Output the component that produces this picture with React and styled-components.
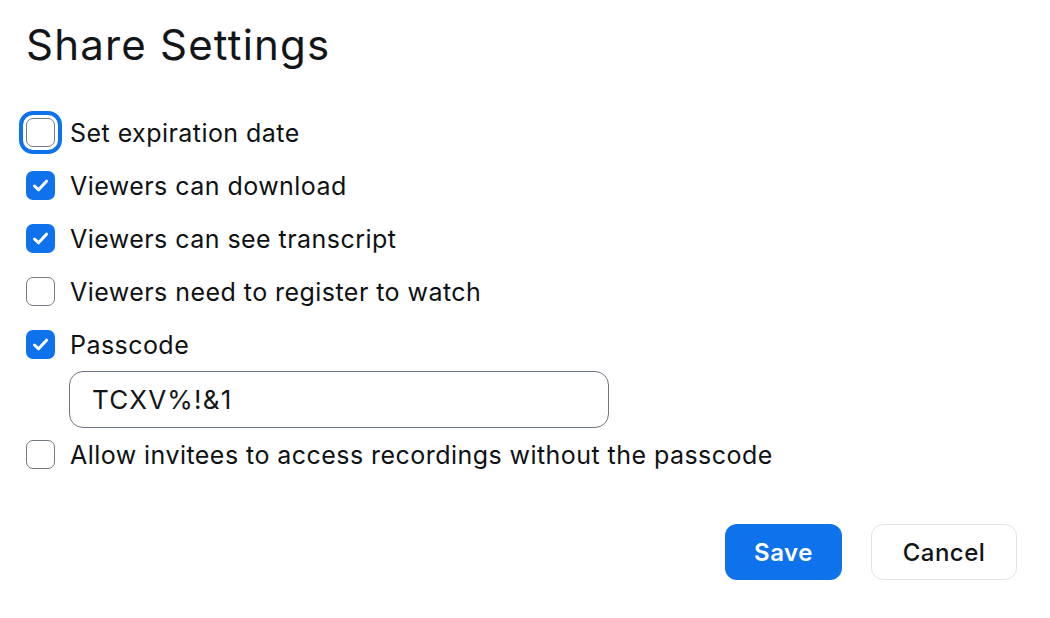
import React, { useState } from "react";
import styled, { createGlobalStyle } from "styled-components";

const GlobalStyle = createGlobalStyle`
  html, body {
    margin: 0;
    padding: 0;
    background: #ffffff;
  }
  body {
    font-family: "Inter", "Liberation Sans", sans-serif;
    color: #131619;
    -webkit-font-smoothing: antialiased;
  }
`;

const options = [
  { id: "expire", label: "Set expiration date", checked: false, focused: true },
  { id: "download", label: "Viewers can download", checked: true },
  { id: "transcript", label: "Viewers can see transcript", checked: true },
  { id: "register", label: "Viewers need to register to watch", checked: false },
  { id: "passcode", label: "Passcode", checked: true, hasInput: true },
  {
    id: "invitees",
    label: "Allow invitees to access recordings without the passcode",
    checked: false,
  },
];

const CheckIcon = () => (
  <svg width="21" height="21" viewBox="0 0 21 21" fill="none">
    <polyline
      points="4.5,11 8.6,14.8 16.5,6.2"
      stroke="#ffffff"
      strokeWidth="3"
      strokeLinecap="round"
      strokeLinejoin="round"
    />
  </svg>
);

const Checkbox = ({ checked, focused, onToggle }) => (
  <Box checked={`${checked}`} focused={`${!!focused}`} onClick={onToggle}>
    {checked && <CheckIcon />}
  </Box>
);

const App = () => {
  const [items, setItems] = useState(options);
  const [passcode, setPasscode] = useState("TCXV%!&1");

  const toggle = (id) => {
    setItems((prev) =>
      prev.map((it) => (it.id === id ? { ...it, checked: !it.checked } : it))
    );
  };

  return (
    <>
      <GlobalStyle />
      <Dialog>
        <Title>Share Settings</Title>
        <OptionList>
          {items.map((item) => (
            <React.Fragment key={item.id}>
              <Row>
                <Checkbox
                  checked={item.checked}
                  focused={item.focused}
                  onToggle={() => toggle(item.id)}
                />
                <Label onClick={() => toggle(item.id)}>{item.label}</Label>
              </Row>
              {item.hasInput && (
                <InputRow>
                  <TextInput
                    value={passcode}
                    onChange={(e) => setPasscode(e.target.value)}
                  />
                </InputRow>
              )}
            </React.Fragment>
          ))}
        </OptionList>
        <Footer>
          <PrimaryButton>Save</PrimaryButton>
          <SecondaryButton>Cancel</SecondaryButton>
        </Footer>
      </Dialog>
    </>
  );
};

const Dialog = styled.div`
  width: 1050px;
  height: 618px;
  box-sizing: border-box;
  padding: 20px 33px 0 26px;
  display: flex;
  flex-direction: column;
`;

const Title = styled.h1`
  margin: 0;
  font-size: 42px;
  line-height: 50px;
  font-weight: 400;
  letter-spacing: 1.2px;
`;

const OptionList = styled.div`
  margin-top: 36px;
  display: flex;
  flex-direction: column;
`;

const Row = styled.div`
  height: 53px;
  display: flex;
  align-items: center;
  gap: 15px;
`;

const Box = styled.div`
  flex: none;
  width: 29px;
  height: 29px;
  box-sizing: border-box;
  border-radius: 7px;
  display: flex;
  align-items: center;
  justify-content: center;
  cursor: pointer;
  background: ${({ checked }) => (checked === "true" ? "#0e72ed" : "#ffffff")};
  border: ${({ checked }) =>
    checked === "true" ? "none" : "1.5px solid #747a82"};
  outline: ${({ focused }) =>
    focused === "true" ? "4px solid #0e72ed" : "none"};
  outline-offset: 3px;
`;

const Label = styled.span`
  font-size: 25px;
  line-height: 30px;
  letter-spacing: 0.45px;
  color: #0f1215;
  cursor: pointer;
`;

const InputRow = styled.div`
  padding-left: 43px;
  display: flex;
`;

const TextInput = styled.input`
  width: 540px;
  height: 57px;
  box-sizing: border-box;
  padding: 0 22px;
  border: 1px solid #6e7680;
  border-radius: 14px;
  font-family: "Inter", "Liberation Sans", sans-serif;
  font-size: 26px;
  letter-spacing: 1.2px;
  color: #131619;
  outline: none;
  background: #ffffff;
`;

const Footer = styled.div`
  margin-top: 43px;
  display: flex;
  justify-content: flex-end;
  gap: 29px;
`;

const ButtonBase = styled.button`
  height: 56px;
  box-sizing: border-box;
  border-radius: 12px;
  font-family: "Inter", "Liberation Sans", sans-serif;
  font-size: 24px;
  letter-spacing: 0.5px;
  cursor: pointer;
`;

const PrimaryButton = styled(ButtonBase)`
  width: 117px;
  border: none;
  background: #0e72ed;
  color: #ffffff;
  font-weight: 600;
`;

const SecondaryButton = styled(ButtonBase)`
  width: 146px;
  border: 1px solid #dfe3e8;
  background: #ffffff;
  color: #131619;
  font-weight: 500;
`;

export default App;
